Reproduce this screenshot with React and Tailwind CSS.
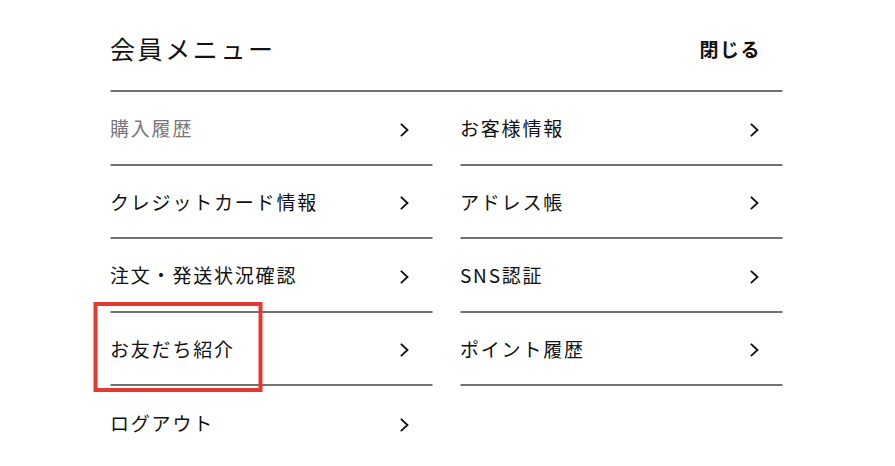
import React from 'react';

const leftItems = [
  { label: '購入履歴', muted: true },
  { label: 'クレジットカード情報' },
  { label: '注文・発送状況確認' },
  { label: 'お友だち紹介', highlight: true },
  { label: 'ログアウト', last: true },
];

const rightItems = [
  { label: 'お客様情報' },
  { label: 'アドレス帳' },
  { label: 'SNS認証' },
  { label: 'ポイント履歴' },
];

function Chevron() {
  return (
    <svg width="10" height="14" viewBox="0 0 10 14" fill="none" className="shrink-0">
      <polyline points="2,1.5 8,7 2,12.5" stroke="#111" strokeWidth="1.8" strokeLinecap="square" />
    </svg>
  );
}

function MenuRow({ item }) {
  return (
    <div
      className={`relative flex h-[73.5px] items-center justify-between pt-[4px] pr-[23px] ${
        item.last ? '' : 'border-b-2 border-[#727272]'
      }`}
    >
      <span
        className={`mb-[4px] text-[19px] leading-none tracking-[1.8px] ${item.muted ? 'text-[#777]' : 'text-[#111]'}`}
      >
        {item.label}
      </span>
      <Chevron />
      {item.highlight && (
        <div className="pointer-events-none absolute left-[-17px] top-[-10.5px] h-[90px] w-[169px] border-4 border-[#e23a2f]" />
      )}
    </div>
  );
}

export default function App() {
  return (
    <div
      className="min-h-[466px] w-full bg-white"
      style={{ fontFamily: '"Noto Sans CJK JP", "Noto Sans", sans-serif' }}
    >
      <div className="mx-auto w-[672px] pt-[22px] translate-x-[-1.5px]">
        {/* Header */}
        <div className="mb-[16px] flex h-[52px] items-center justify-between">
          <h1 className="text-[25px] font-normal leading-none tracking-[2.6px] text-[#111]">会員メニュー</h1>
          <button className="mr-[21px] text-[19px] font-bold leading-none tracking-[1.5px] text-[#111]">
            閉じる
          </button>
        </div>

        <div className="h-[2px] bg-[#727272]" />

        {/* Menu grid */}
        <div className="grid grid-cols-2 gap-x-[28px]">
          <div className="flex flex-col">
            {leftItems.map((item) => (
              <MenuRow key={item.label} item={item} />
            ))}
          </div>
          <div className="flex flex-col">
            {rightItems.map((item) => (
              <MenuRow key={item.label} item={item} />
            ))}
          </div>
        </div>
      </div>
    </div>
  );
}
